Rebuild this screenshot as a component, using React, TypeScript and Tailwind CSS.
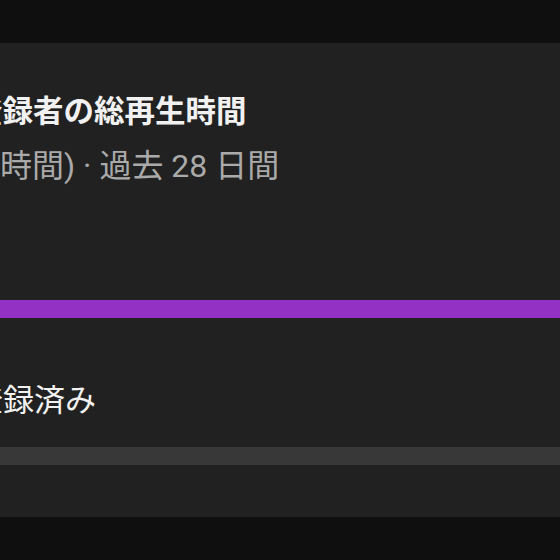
export default function App(): JSX.Element {
  return (
    <div
      className="flex h-[560px] w-[560px] flex-col overflow-hidden bg-[#0f0f0f]"
      style={{ fontFamily: 'Roboto, "Noto Sans CJK JP", sans-serif' }}
    >
      <div className="h-[43px] shrink-0" />
      <section className="flex h-[474px] shrink-0 flex-col overflow-hidden bg-[#212121]">
        <h2 className="mt-[49px] -ml-[28px] whitespace-nowrap text-[30.5px] font-bold leading-[40px] text-[#f1f1f1]">
          登録者の総再生時間
        </h2>
        <p className="mt-[14px] whitespace-nowrap text-[32px] leading-[40px] text-[#aaaaaa]">
          時間) · 過去 28 日間
        </p>
        <div className="mt-[114px] h-[18px] w-full bg-[#9331c4]" />
        <p className="mt-[63px] -ml-[28px] whitespace-nowrap text-[31px] leading-[40px] text-[#f1f1f1]">
          登録済み
        </p>
        <div className="mt-[26px] h-[18px] w-full bg-[#383838]" />
      </section>
    </div>
  );
}
